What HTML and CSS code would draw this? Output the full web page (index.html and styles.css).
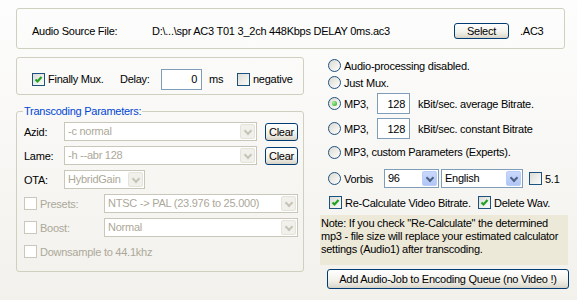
FILE: index.html
```html
<!DOCTYPE html>
<html lang="en">
<head>
    <meta charset="UTF-8">
    <title>Audio</title>
    <link rel="stylesheet" href="styles.css">
</head>
<body>
<div class="page">
    <!-- Audio source -->
    <div class="group source">
        <span class="src-label">Audio Source File:</span>
        <span class="src-path">D:\...\spr AC3 T01 3_2ch 448Kbps DELAY 0ms.ac3</span>
        <button class="xp-btn select-btn">Select</button>
        <span>.AC3</span>
    </div>

    <div class="cols">
        <div class="left">
            <div class="group mux">
                <span class="chk on"><svg width="11" height="11" viewBox="0 0 11 11"><path d="M2.5 5.5l2 2 4-4.5" stroke="#21a121" stroke-width="2.2" fill="none"/></svg></span>
                <span class="mux-text">Finally Mux.</span>
                <span class="delay-label">Delay:</span>
                <span class="txt delay">0</span>
                <span class="ms">ms</span>
                <span class="chk"></span>
                <span class="chk-text">negative</span>
            </div>

            <fieldset class="trans">
                <legend>Transcoding Parameters:</legend>
                <div class="row">
                    <span class="lbl">Azid:</span>
                    <span class="combo off wide"><span class="val">-c normal</span><span class="arrow"></span></span>
                    <button class="xp-btn clear">Clear</button>
                </div>
                <div class="row">
                    <span class="lbl">Lame:</span>
                    <span class="combo off wide"><span class="val">-h --abr 128</span><span class="arrow"></span></span>
                    <button class="xp-btn clear">Clear</button>
                </div>
                <div class="row">
                    <span class="lbl">OTA:</span>
                    <span class="combo off ota"><span class="val">HybridGain</span><span class="arrow"></span></span>
                </div>
                <div class="row">
                    <span class="chk off"></span>
                    <span class="lbl2">Presets:</span>
                    <span class="combo off preset"><span class="val">NTSC -&gt; PAL (23.976 to 25.000)</span><span class="arrow"></span></span>
                </div>
                <div class="row">
                    <span class="chk off"></span>
                    <span class="lbl2">Boost:</span>
                    <span class="combo off preset"><span class="val">Normal</span><span class="arrow"></span></span>
                </div>
                <div class="row">
                    <span class="chk off"></span>
                    <span class="chk-text dim">Downsample to 44.1khz</span>
                </div>
            </fieldset>
        </div>

        <div class="right">
            <div class="opt h17"><span class="radio"></span><span>Audio-processing disabled.</span></div>
            <div class="opt h17"><span class="radio"></span><span>Just Mux.</span></div>
            <div class="opt mp3 first"><span class="radio sel"></span><span class="mp3-text">MP3,</span><span class="txt rate">128</span><span class="kbit">kBit/sec. average Bitrate.</span></div>
            <div class="opt mp3"><span class="radio"></span><span class="mp3-text">MP3,</span><span class="txt rate">128</span><span class="kbit">kBit/sec. constant Bitrate</span></div>
            <div class="opt custom"><span class="radio"></span><span>MP3, custom Parameters (Experts).</span></div>
            <div class="opt vorbis">
                <span class="radio"></span><span class="vorbis-text">Vorbis</span>
                <span class="combo on q"><span class="val">96</span><span class="arrow"></span></span>
                <span class="combo on lang"><span class="val">English</span><span class="arrow"></span></span>
                <span class="chk ch51"></span><span class="chk-text">5.1</span>
            </div>
            <div class="checks">
                <span class="chk on"><svg width="11" height="11" viewBox="0 0 11 11"><path d="M2.5 5.5l2 2 4-4.5" stroke="#21a121" stroke-width="2.2" fill="none"/></svg></span>
                <span class="chk-text recalc">Re-Calculate Video Bitrate.</span>
                <span class="chk on"><svg width="11" height="11" viewBox="0 0 11 11"><path d="M2.5 5.5l2 2 4-4.5" stroke="#21a121" stroke-width="2.2" fill="none"/></svg></span>
                <span class="chk-text">Delete Wav.</span>
            </div>
            <div class="note">Note: If you check "Re-Calculate" the determined<br>mp3 - file size will replace your estimated calculator<br>settings (Audio1) after transcoding.</div>
            <button class="xp-btn add-btn">Add Audio-Job to Encoding Queue (no Video !)</button>
        </div>
    </div>
</div>
</body>
</html>
```

FILE: styles.css
```css
body {
    margin: 0;
    font-family: "Liberation Sans", Arial, sans-serif;
    font-size: 11px;
    letter-spacing: -0.25px;
    color: #000;
}
.page {
    width: 577px;
    height: 300px;
    padding-top: 8px;
    box-sizing: border-box;
    background: linear-gradient(#fdfdfd, #f2f1ec);
}
.group {
    display: flex;
    align-items: center;
    box-sizing: border-box;
    border: 1px solid #d0d0bf;
    border-radius: 3px;
}
.source {
    height: 41px;
    margin: 0 12px 0 16px;
    padding: 4px 0 0 15px;
}
.src-label { width: 120px; }
.src-path { width: 302px; }

/* botones estilo XP */
.xp-btn {
    font: inherit;
    letter-spacing: inherit;
    color: #000;
    padding: 0;
    border: 1px solid #003c74;
    border-radius: 3px;
    background: linear-gradient(#ffffff, #f3f2ec 55%, #e3e0d6 85%, #d6d0c5);
}
.select-btn {
    width: 55px;
    height: 16px;
    margin-right: 11px;
}
.cols {
    display: flex;
    margin-top: 8px;
}
.left {
    width: 288px;
    margin-left: 16px;
}
.mux {
    height: 38px;
    padding: 6px 0 0 15px;
}
.mux-text { width: 72px; margin-left: 3px; }
.delay-label { width: 41px; }
.ms { width: 28px; margin-left: 7px; }
.chk-text { margin-left: 3px; white-space: nowrap; }
.dim { color: #aca899; }

/* checkbox y radio */
.chk {
    display: inline-flex;
    align-items: center;
    justify-content: center;
    width: 13px;
    height: 13px;
    box-sizing: border-box;
    flex: none;
    border: 1px solid #1c5180;
    background: linear-gradient(135deg, #dcdcd7, #fbfbf9);
}
.chk.off {
    border-color: #cac8bb;
    background: #fff;
}
.radio {
    width: 13px;
    height: 13px;
    box-sizing: border-box;
    flex: none;
    border: 1px solid #1c5180;
    border-radius: 50%;
    background: linear-gradient(135deg, #dcd9cf, #ffffff);
    margin-right: 3px;
    display: inline-flex;
    align-items: center;
    justify-content: center;
}
.radio.sel::after {
    content: "";
    width: 5px;
    height: 5px;
    border-radius: 50%;
    background: radial-gradient(circle at 35% 35%, #a8f09a, #21a121);
}

/* cuadros de texto */
.txt {
    box-sizing: border-box;
    border: 1px solid #7f9db9;
    background: #fff;
    padding-right: 4px;
    display: flex;
    align-items: center;
    justify-content: flex-end;
}
.delay {
    width: 41px;
    height: 21px;
}

/* fieldset */
.trans {
    margin: 10px 0 0;
    padding: 4px 0 0 7px;
    height: 167px;
    box-sizing: border-box;
    border: 1px solid #d0d0bf;
    border-radius: 3px;
}
.trans legend {
    color: #0046d5;
    padding: 0 1px;
    margin-left: -1px;
    line-height: 13px;
}
.row {
    display: flex;
    align-items: center;
    height: 19px;
    margin-bottom: 5px;
}
.lbl { width: 40px; }
.lbl2 { width: 64px; margin-left: 3px; color: #aca899; }

/* combos */
.combo {
    display: flex;
    box-sizing: border-box;
    height: 19px;
    border: 1px solid #c9c7ba;
    background: #fff;
}
.combo .val {
    flex: 1;
    padding-left: 3px;
    line-height: 17px;
    white-space: nowrap;
    overflow: hidden;
}
.combo.off .val { color: #aca899; }
.combo .arrow {
    position: relative;
    width: 15px;
    margin: 1px;
    border-radius: 2px;
    background: #f1f0ea;
    border: 1px solid #e6e4da;
    box-sizing: border-box;
}
.combo .arrow::after {
    content: "";
    position: absolute;
    left: 4px;
    top: 3px;
    width: 4px;
    height: 4px;
    border-right: 2px solid #c6c4b8;
    border-bottom: 2px solid #c6c4b8;
    transform: rotate(45deg);
}
.combo.on { border-color: #7f9db9; }
.combo.on .arrow {
    background: linear-gradient(#c9d8fc, #b1c6f6);
    border-color: #b9cdf8;
}
.combo.on .arrow::after { border-color: #4d6185; }
.wide { width: 193px; }
.ota { width: 81px; }
.preset { width: 194px; }
.clear {
    width: 33px;
    height: 18px;
    margin-left: 8px;
}

/* columna derecha */
.right {
    width: 250px;
    margin-left: 16px;
}
.opt {
    display: flex;
    align-items: center;
    padding-left: 8px;
    white-space: nowrap;
}
.h17 { height: 17px; }
.mp3 { height: 21px; margin-top: 4px; }
.mp3.first { margin-top: 2px; }
.mp3-text { width: 33px; }
.rate { width: 33px; height: 21px; }
.kbit { margin-left: 8px; }
.custom { height: 18px; margin-top: 4px; }
.vorbis { height: 19px; margin-top: 8px; }
.vorbis-text { width: 40px; }
.q { width: 55px; }
.lang { width: 82px; margin-left: 2px; }
.ch51 { margin-left: 6px; }
.checks {
    display: flex;
    align-items: center;
    height: 17px;
    margin-top: 6px;
    padding-left: 9px;
}
.recalc { width: 133px; }
.note {
    margin-top: 4px;
    width: 248px;
    height: 50px;
    box-sizing: border-box;
    padding: 2px 1px;
    line-height: 13px;
    white-space: nowrap;
    background: #ece9d8;
}
.add-btn {
    display: block;
    margin: 4px 0 0 7px;
    width: 242px;
    height: 20px;
}
```
